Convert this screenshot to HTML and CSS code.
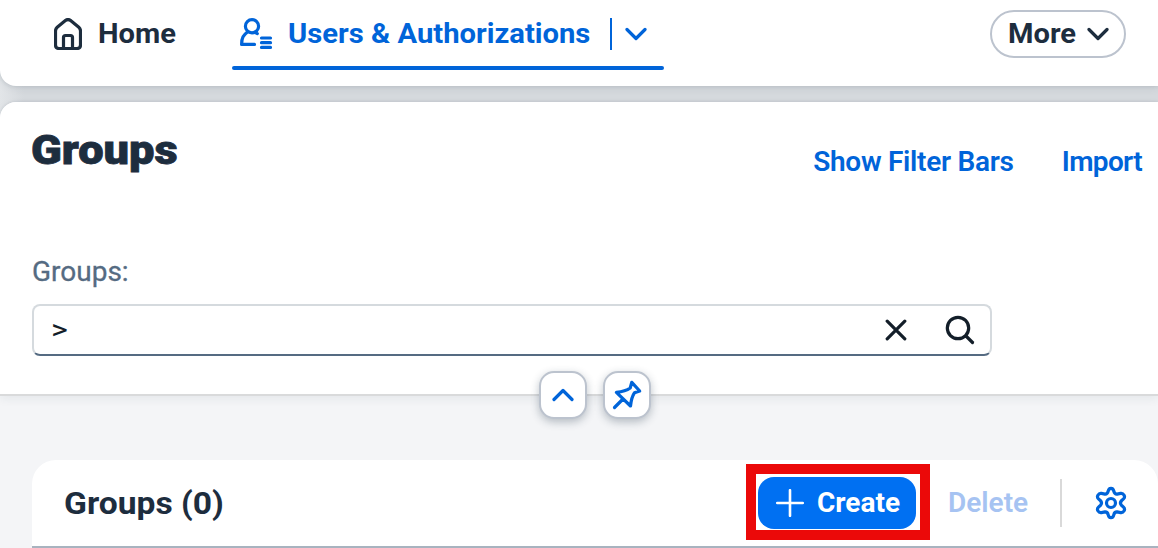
FILE: index.html
```html
<!DOCTYPE html>
<html lang="en">
<head>
<meta charset="utf-8">
<title>Users &amp; Authorizations</title>
<link rel="stylesheet" href="styles.css">
</head>
<body>
<header class="nav">
  <a class="nav-item home">
    <svg class="icon-home" width="28" height="32" viewBox="0 0 28 32"><path d="M1.500 13Q1.500 10.800 3.200 9.300L11.700 2.300Q14 .8 16.300 2.300L24.800 9.300Q26.500 10.800 26.500 13V27Q26.500 30.500 23 30.500H5Q1.500 30.500 1.500 27ZM9.500 30V19.500Q9.500 17.500 11.500 17.500H16.500Q18.500 17.500 18.500 19.500V30"/></svg>
    <span class="t-home">Home</span>
  </a>
  <div class="nav-item active">
    <svg class="icon-user" width="33" height="32" viewBox="0 0 33 32"><circle cx="12" cy="8.200" r="6.600"/><path d="M7.500 14C3.500 17 1.600 19.500 1.600 26.400H14.500M17.300 15.600L14.800 14.400"/><path d="M21.500 20H30.500M21.500 24.700H30.500M21.500 29.400H30.500"/></svg>
    <span class="t-users">Users &amp; Authorizations</span>
    <i class="bar"></i>
    <svg class="chevron" width="22" height="14" viewBox="0 0 22 14"><path d="M2 2.500L11 11.500L20 2.500"/></svg>
  </div>
  <button class="more"><span class="t-more">More</span><svg class="chevron" width="22" height="14" viewBox="0 0 22 14"><path d="M2 2.500L11 11.500L20 2.500"/></svg></button>
</header>
<main class="page">
  <section class="filters">
    <div class="title-row">
      <h1 class="title">Groups</h1>
      <div class="actions"><a class="t-show">Show Filter Bars</a><a class="t-import">Import</a></div>
    </div>
    <label class="label">Groups:</label>
    <div class="field">
      <span class="value">&gt;</span>
      <svg class="clear" width="22" height="22" viewBox="0 0 22 22"><path d="M2.200 2.200L19.800 19.800M19.800 2.200L2.200 19.800"/></svg>
      <svg class="search" width="30" height="30" viewBox="0 0 30 30"><circle cx="13" cy="13" r="10.700"/><path d="M21 21L27.500 27.500"/></svg>
    </div>
    <div class="toggles">
      <button class="toggle"><svg width="22" height="14" viewBox="0 0 22 14"><path d="M2 11.500L11 2.500L20 11.500"/></svg></button>
      <button class="toggle"><svg width="30" height="30" viewBox="0 0 30 30"><path d="M2.500 27.500L11 19M19.800 2.300L27.700 11L22.500 12.800Q19.500 17 18.500 26L4.400 12.300Q13.500 11.500 18.200 8Z"/></svg></button>
    </div>
  </section>
  <section class="table">
    <h2 class="table-title">Groups (0)</h2>
    <div class="highlight"><button class="create"><svg width="28" height="28" viewBox="0 0 28 28"><path d="M14 1.200V26.800M1.200 14H26.800"/></svg><span class="t-create">Create</span></button></div>
    <span class="delete">Delete</span>
    <i class="divider"></i>
    <svg class="gear" width="32" height="34" viewBox="0 0 32 34"><circle cx="16" cy="17" r="4.500"/><path d="M13.200 5.200Q13.700 2.300 16 2.300Q18.300 2.300 18.800 5.200Q19.500 8.300 22.100 8.100L25.600 7.400Q27.800 7 29.100 9.200Q30.200 11.300 28.500 12.900L26.700 14.500Q24.200 17 26.700 19.500L28.500 21.100Q30.200 22.700 29.100 24.800Q27.800 27 25.600 26.600L22.100 25.900Q19.500 25.700 18.800 28.800Q18.300 31.700 16 31.700Q13.700 31.700 13.200 28.800Q12.500 25.700 9.900 25.900L6.400 26.600Q4.200 27 2.900 24.800Q1.800 22.700 3.500 21.100L5.300 19.500Q7.800 17 5.300 14.500L3.500 12.900Q1.800 11.300 2.900 9.200Q4.200 7 6.400 7.400L9.900 8.100Q12.500 8.300 13.200 5.200Z"/></svg>
  </section>
</main>
</body>
</html>
```
FILE: styles.css
```css
* { box-sizing: border-box; }
html, body { height: 100%; }
body { margin: 0; overflow: hidden; background: linear-gradient(90deg, #e2e5e8 0, #d5d9dd 24px); font: 700 28px/36px Roboto, "Noto Sans", sans-serif; color: #1d2d3e; white-space: nowrap; }
button { padding: 0; font: inherit; color: inherit; background: #fff; }
h1, h2 { margin: 0; }
svg { display: block; flex: none; fill: none; stroke: currentColor; stroke-width: 3.2; stroke-linecap: round; stroke-linejoin: round; }

.nav { height: 86px; display: flex; align-items: flex-start; background: #fff; border-radius: 0 0 0 16px; box-shadow: 0 0 4px rgba(34, 53, 72, .16), 0 3px 9px rgba(34, 53, 72, .06); }
.nav-item { display: flex; align-items: center; height: 70px; padding-bottom: 2px; }
.home { width: 178px; margin-left: 54px; gap: 16px; }
.t-home { transform: scaleX(1.04); transform-origin: 0 50%; }
.active { width: 432px; padding-left: 8px; color: #0064d9; position: relative; }
.active::after { content: ""; position: absolute; inset: auto 0 0 0; height: 4px; border-radius: 2px; background: #0064d9; }
.t-users { width: 302px; margin-left: 15px; transform: scaleX(1.043); transform-origin: 0 50%; }
.bar { width: 2px; height: 32px; margin: 0 14px 0 20px; background: #0064d9; }
.nav-item .chevron { margin-left: -1px; }
.more { display: flex; align-items: center; width: 136px; height: 48px; margin: 10px 0 0 326px; padding-left: 16px; border: 2px solid #bcc3ce; border-radius: 24px; }
.t-more { width: 68px; margin-right: 11px; text-align: left; transform: scaleX(1.04); transform-origin: 0 50%; }

.page { height: 446px; margin-top: 16px; border-radius: 16px 0 0 0; background: #f4f5f7; box-shadow: 0 0 3px rgba(34, 53, 72, .14); }
.filters { position: relative; height: 294px; padding: 0 0 0 32px; background: #fff; border-bottom: 2px solid #d9dadb; border-radius: 16px 0 0 0; box-shadow: 0 3px 10px rgba(34, 53, 72, .07); }
.title-row { display: flex; justify-content: space-between; height: 152px; padding: 25px 16px 0 0; }
.title { margin-left: -1px; font-size: 40px; font-weight: 900; line-height: 48px; -webkit-text-stroke: .8px currentColor; transform: scaleX(1.13); transform-origin: 0 50%; }
.actions { display: flex; gap: 48px; padding-top: 17px; color: #0064d9; font-weight: 600; }
.t-show { letter-spacing: -.27px; }
.t-import { letter-spacing: -.65px; }
.label { display: block; height: 50px; color: #556b82; font-weight: 400; -webkit-text-stroke: .3px currentColor; }
.field { display: flex; align-items: center; width: 960px; height: 52px; padding: 0 15px 0 17px; border: 2px solid #d5dade; border-bottom-color: #556b82; border-radius: 8px; color: #131e29; }
.value { flex: 1; font-weight: 400; transform: scaleX(1.15); transform-origin: 0 50%; }
.clear { margin-right: 38px; }
.toggles { position: absolute; left: 539px; top: 269px; display: flex; gap: 16px; }
.toggle { display: grid; place-items: center; width: 48px; height: 48px; color: #0064d9; border: 2px solid #bcc3ce; border-radius: 15px; box-shadow: 0 3px 8px rgba(34, 53, 72, .3); }
.table { display: flex; align-items: center; height: 88px; margin: 64px 0 0 32px; padding-left: 32px; background: #fff; border-bottom: 2px solid #a8b3bf; border-radius: 24px 24px 0 0; }
.table-title { width: 682px; font-size: 32px; transform: scaleX(1.05); transform-origin: 0 50%; }
.highlight { display: flex; align-items: center; padding-left: 2px; width: 184px; height: 76px; margin-top: -2px; border: 10px solid #eb0909; }
.create { display: flex; align-items: center; width: 158px; height: 52px; margin-top: 2px; padding-left: 18px; gap: 13px; color: #fff; border: 0; border-radius: 16px; background: #0070f2; }
.create svg { stroke-width: 2.6; }
.delete { width: 79px; margin-left: 18px; color: #a6c3f2; font-weight: 600; }
.divider { width: 2px; height: 48px; margin: 0 33px; background: #d9d9d9; }
.gear { color: #0064d9; }
```
